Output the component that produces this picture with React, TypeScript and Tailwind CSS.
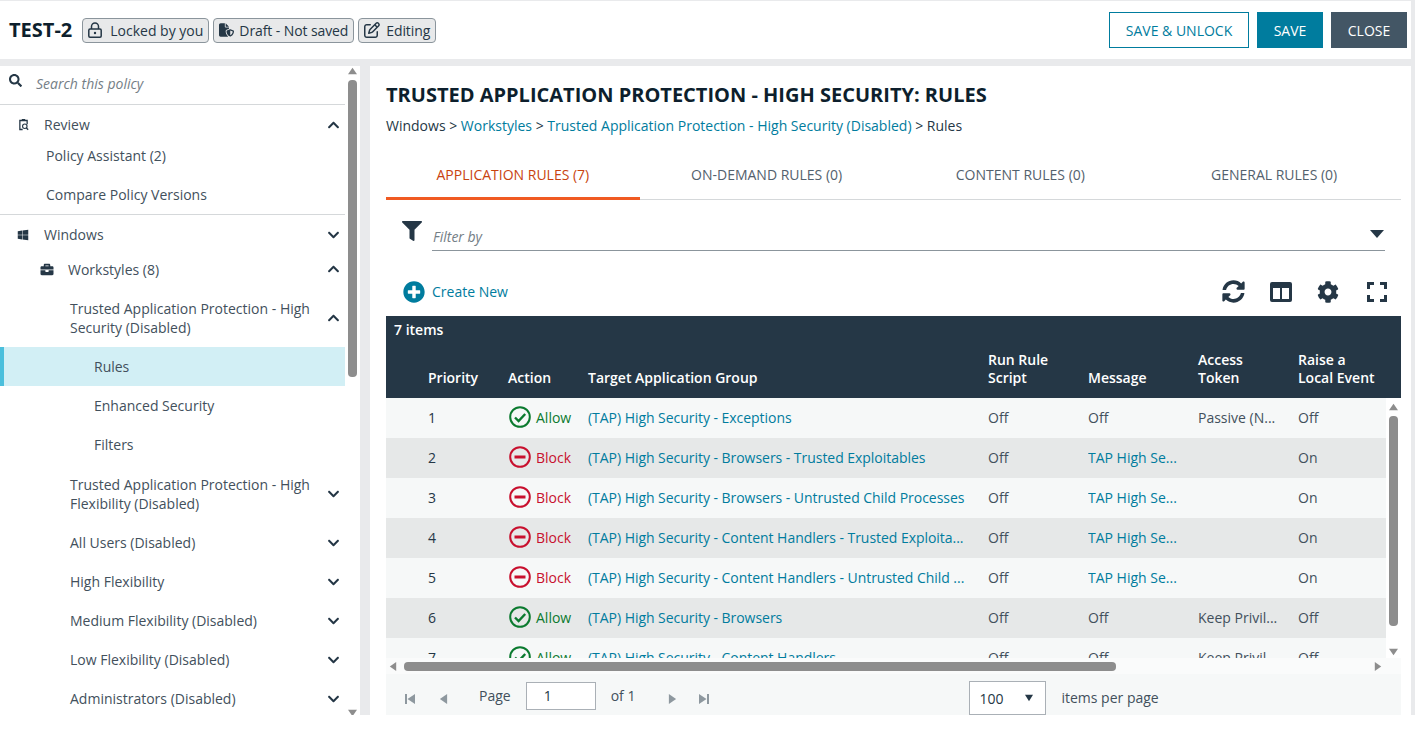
import {
    FaBriefcase,
    FaChevronDown,
    FaChevronUp,
    FaCog,
    FaFilter,
    FaPlusCircle,
    FaSearch,
    FaSyncAlt,
    FaWindows,
} from 'react-icons/fa';
import { FaFileShield, FaRegPenToSquare } from 'react-icons/fa6';

type NavRow = { label: string; height: string };

const policyRows: NavRow[] = [
    { label: 'Trusted Application Protection - High Flexibility (Disabled)', height: 'h-[59px]' },
    { label: 'All Users (Disabled)', height: 'h-[39px]' },
    { label: 'High Flexibility', height: 'h-[39px]' },
    { label: 'Medium Flexibility (Disabled)', height: 'h-[39px]' },
    { label: 'Low Flexibility (Disabled)', height: 'h-[39px]' },
    { label: 'Administrators (Disabled)', height: 'h-[39px]' },
];

type Rule = {
    id: number;
    allow: boolean;
    group: string;
    message: string;
    token: string;
    local: string;
};

const rules: Rule[] = [
    { id: 1, allow: true, group: '(TAP) High Security - Exceptions', message: 'Off', token: 'Passive (N...', local: 'Off' },
    { id: 2, allow: false, group: '(TAP) High Security - Browsers - Trusted Exploitables', message: 'TAP High Se...', token: '', local: 'On' },
    { id: 3, allow: false, group: '(TAP) High Security - Browsers - Untrusted Child Processes', message: 'TAP High Se...', token: '', local: 'On' },
    { id: 4, allow: false, group: '(TAP) High Security - Content Handlers - Trusted Exploita...', message: 'TAP High Se...', token: '', local: 'On' },
    { id: 5, allow: false, group: '(TAP) High Security - Content Handlers - Untrusted Child ...', message: 'TAP High Se...', token: '', local: 'On' },
    { id: 6, allow: true, group: '(TAP) High Security - Browsers', message: 'Off', token: 'Keep Privil...', local: 'Off' },
    { id: 7, allow: true, group: '(TAP) High Security - Content Handlers', message: 'Off', token: 'Keep Privil...', local: 'Off' },
];

const gridCols = 'grid grid-cols-[42px_80px_80px_400px_100px_110px_100px_88px]';

function Badge({ icon, label, tight }: { icon: React.ReactNode; label: string; tight?: boolean }) {
    return (
        <div className="h-[25px] flex items-center gap-[6px] px-[5px] rounded-[4px] border border-[#8b959c] bg-[#e8e9ea] text-[14px] text-[#253746]">
            {icon}
            <span className={tight ? 'tracking-[-0.1px]' : ''}>{label}</span>
        </div>
    );
}

function LockIcon() {
    return (
        <svg viewBox="0 0 14 16" className="w-[14px] h-[16px] mr-[2px] text-[#253746]" fill="none" stroke="currentColor" strokeWidth="1.5">
            <path d="M3.5 7V4.5a3.5 3.5 0 017 0V7" />
            <rect x="0.8" y="7" width="12.4" height="8.2" rx="1.2" />
            <circle cx="7" cy="11" r="1.2" fill="currentColor" stroke="none" />
        </svg>
    );
}

function Chevron({ open, place = 'top-1/2' }: { open?: boolean; place?: string }) {
    const cls = `w-[13px] h-[13px] text-[#253746] absolute right-[5px] ${place} -translate-y-1/2`;
    return open ? <FaChevronUp className={cls} /> : <FaChevronDown className={cls} />;
}

function ReviewIcon() {
    return (
        <svg viewBox="0 0 12 14" className="w-[11px] h-[12px] text-[#253746]" fill="currentColor">
            <path d="M1 1h3V0h4v1h3v5H9.5V2.5h-7v9H5V13H1z" />
            <circle cx="7.5" cy="8.5" r="2.6" fill="none" stroke="currentColor" strokeWidth="1.3" />
            <path d="M9.2 10.2l2.2 2.4" stroke="currentColor" strokeWidth="1.5" />
        </svg>
    );
}

function StatusIcon({ allow }: { allow: boolean }) {
    return (
        <svg viewBox="0 0 22 22" className="w-[22px] h-[22px] shrink-0 ml-[1px]" fill="none" stroke="currentColor" strokeWidth="2">
            <circle cx="11" cy="11" r="9.8" />
            {allow ? <path d="M6 11.5l3.6 3.6L16.2 8" strokeWidth="2.4" /> : <path d="M5.5 11h11" strokeWidth="3" />}
        </svg>
    );
}

function Triangle({ dir, className }: { dir: 'up' | 'down' | 'left' | 'right'; className: string }) {
    const d = { up: 'M5 1l5 8H0z', down: 'M0 1h10L5 9z', left: 'M9 0v10L1 5z', right: 'M1 0v10l8-5z' }[dir];
    return (
        <svg viewBox="0 0 10 10" className={className} fill="currentColor" preserveAspectRatio="none">
            <path d={d} />
        </svg>
    );
}

function PagerEnd({ flip }: { flip?: boolean }) {
    return (
        <svg viewBox="0 0 10 10" className={`w-[10px] h-[10px] text-[#8e989f] ${flip ? 'scale-x-[-1]' : ''}`} fill="currentColor">
            <path d="M0 0h2v10H0zM10 0v10L2.5 5z" />
        </svg>
    );
}

function Sidebar() {
    return (
        <aside className="relative w-[360px] shrink-0 bg-white overflow-hidden text-[14px] text-[#42505c]">
            <div className="w-[345px]">
                <div className="h-[39px] flex items-center border-b border-[#d5d8da]">
                    <FaSearch className="w-[13px] h-[13px] ml-[9px] mb-[10px] text-[#253746]" />
                    <span className="ml-[14px] mb-[4px] italic text-[#747e86]">Search this policy</span>
                </div>
                <div className="relative h-[39px] flex items-center pl-[18px] gap-[15px]">
                    <ReviewIcon />
                    <span>Review</span>
                    <Chevron open />
                </div>
                <div className="h-[31px] -mt-[4px] flex items-center pl-[46px]">Policy Assistant (2)</div>
                <div className="h-[39px] mt-[4px] flex items-center pl-[46px]">Compare Policy Versions</div>
                <div className="h-[40px] border-t border-[#d5d8da] relative flex items-center pl-[17px] gap-[15px]">
                    <FaWindows className="w-[12px] h-[12px] text-[#253746]" />
                    <span>Windows</span>
                    <Chevron />
                </div>
                <div className="relative h-[30px] flex items-center pl-[40px] gap-[14px]">
                    <FaBriefcase className="w-[14px] h-[13px] text-[#253746]" />
                    <span>Workstyles (8)</span>
                    <Chevron open />
                </div>
                <div className="relative h-[63px] pt-[5px] flex items-center pl-[70px] pr-[30px] leading-[19px]">
                    <span>Trusted Application Protection - High Security (Disabled)</span>
                    <Chevron open place="top-[34px]" />
                </div>
                <div className="h-[39px] flex items-center pl-[90px] bg-[#d2eff5] border-l-[4px] border-[#4bbfdc]">Rules</div>
                <div className="h-[39px] flex items-center pl-[94px]">Enhanced Security</div>
                <div className="h-[39px] flex items-center pl-[94px]">Filters</div>
                {policyRows.map((row) => (
                    <div key={row.label} className={`relative ${row.height} flex items-center pl-[70px] pr-[30px] leading-[19px]`}>
                        <span>{row.label}</span>
                        <Chevron />
                    </div>
                ))}
            </div>
            <Triangle dir="up" className="absolute left-[348px] top-[1px] w-[9px] h-[8px] text-[#8d8d8d]" />
            <div className="absolute left-[348px] top-[14px] w-[9px] h-[297px] rounded-[4px] bg-[#8d8d8d]" />
            <Triangle dir="down" className="absolute left-[348px] top-[643px] w-[9px] h-[8px] text-[#8d8d8d]" />
        </aside>
    );
}

function TableRow({ rule, striped }: { rule: Rule; striped: boolean }) {
    const link = 'text-[#007c9e] truncate';
    return (
        <div className={`${gridCols} h-[40px] pb-[2px] items-center ${striped ? 'bg-[#e6e8e8]' : 'bg-[#f6f8f8]'} text-[#42505c]`}>
            <span />
            <span className="text-[#253746]">{rule.id}</span>
            <span className={`flex items-center gap-[5px] ${rule.allow ? 'text-[#0b7a2f]' : 'text-[#c8102e]'}`}>
                <StatusIcon allow={rule.allow} />
                {rule.allow ? 'Allow' : 'Block'}
            </span>
            <span className="text-[#007c9e] whitespace-nowrap tracking-[-0.04px]">{rule.group}</span>
            <span>Off</span>
            <span className={rule.message === 'Off' ? '' : link}>{rule.message}</span>
            <span className="whitespace-nowrap">{rule.token}</span>
            <span>{rule.local}</span>
        </div>
    );
}

function Table() {
    return (
        <div className="w-[1015px] mt-[12px]">
            <div className="h-[82px] bg-[#253746] text-white relative">
                <div className="pl-[8px] pt-[4px] font-semibold text-[14px] leading-[19px]">7 items</div>
                <div className={`${gridCols} absolute left-0 right-0 bottom-[11px] items-end font-semibold leading-[18px] text-[14px]`}>
                    <span />
                    <span>Priority</span>
                    <span>Action</span>
                    <span>Target Application Group</span>
                    <span>
                        Run Rule
                        <br />
                        Script
                    </span>
                    <span>Message</span>
                    <span>
                        Access
                        <br />
                        Token
                    </span>
                    <span className="whitespace-nowrap">
                        Raise a
                        <br />
                        Local Event
                    </span>
                </div>
            </div>
            <div className="relative h-[276px] overflow-hidden">
                <div className="h-[260px] overflow-hidden w-[1000px]">
                    {rules.map((rule, i) => (
                        <TableRow key={rule.id} rule={rule} striped={i % 2 === 1} />
                    ))}
                </div>
                <div className="absolute right-0 top-0 h-[260px] w-[15px] bg-white" />
                <Triangle dir="up" className="absolute left-[1003px] top-[5px] w-[9px] h-[8px] text-[#8d8d8d]" />
                <div className="absolute left-[1003px] top-[18px] w-[9px] h-[210px] rounded-[4px] bg-[#8d8d8d]" />
                <Triangle dir="down" className="absolute left-[1003px] top-[250px] w-[9px] h-[8px] text-[#8d8d8d]" />
                <div className="absolute left-0 right-0 bottom-0 h-[16px] bg-[#fafbfb]">
                    <Triangle dir="left" className="absolute left-[3px] top-[4px] w-[8px] h-[9px] text-[#8d8d8d]" />
                    <div className="absolute left-[18px] top-[4px] w-[712px] h-[9px] rounded-[4px] bg-[#8d8d8d]" />
                    <Triangle dir="right" className="absolute left-[988px] top-[4px] w-[8px] h-[9px] text-[#8d8d8d]" />
                </div>
            </div>
            <div className="h-[41px] bg-[#f6f8f8] flex items-center text-[14px] text-[#42505c]">
                <span className="ml-[19px] mt-[8px]"><PagerEnd /></span>
                <Triangle dir="left" className="ml-[24px] mt-[8px] w-[9px] h-[10px] text-[#8e989f]" />
                <span className="ml-[31px] mt-[1px]">Page</span>
                <div className="ml-[15px] mt-[2px] w-[70px] h-[28px] border border-[#aab0b6] bg-white flex items-center pl-[17px] text-[#253746]">1</div>
                <span className="ml-[15px] mt-[1px]">of 1</span>
                <Triangle dir="right" className="ml-[33px] mt-[8px] w-[9px] h-[10px] text-[#8e989f]" />
                <span className="ml-[22px] mt-[8px]"><PagerEnd flip /></span>
                <div className="ml-[260px] self-end w-[77px] h-[34px] border border-[#aab0b6] bg-white flex items-center justify-between pl-[9px] pr-[12px] text-[#253746]">
                    100
                    <Triangle dir="down" className="w-[8px] h-[8px] text-[#253746]" />
                </div>
                <span className="ml-[15px] mt-[6px]">items per page</span>
            </div>
        </div>
    );
}

export default function App() {
    return (
        <div className="w-[1427px] h-[734px] bg-white font-['Open_Sans',sans-serif]">
            <div className="w-[1415px] h-[715px] bg-[#e9eaec] pt-px pr-[4px] flex flex-col">
                <header className="h-[58px] bg-white flex items-center pl-[9px] pr-[4px]">
                    <h1 className="text-[20px] font-bold text-[#0d1f2d] mr-[10px]">TEST-2</h1>
                    <div className="flex gap-[4px]">
                        <Badge icon={<LockIcon />} label="Locked by you" />
                        <Badge tight icon={<FaFileShield className="w-[15px] h-[16px] text-[#253746] -mr-px" />} label="Draft - Not saved" />
                        <Badge tight icon={<FaRegPenToSquare className="w-[16px] h-[16px] text-[#253746]" />} label="Editing" />
                    </div>
                    <div className="ml-auto flex gap-[8px] text-[14px]">
                        <button className="h-[36px] w-[140px] border border-[#007c9e] bg-white text-[#007c9e]">SAVE &amp; UNLOCK</button>
                        <button className="h-[36px] w-[66px] bg-[#007c9e] text-white">SAVE</button>
                        <button className="h-[36px] w-[76px] bg-[#435665] text-white">CLOSE</button>
                    </div>
                </header>
                <div className="flex-1 mt-[7px] flex gap-[10px] min-h-0">
                    <Sidebar />
                    <main className="flex-1 bg-white pl-[16px] pr-[10px] overflow-hidden text-[14px] text-[#253746]">
                        <h2 className="mt-[15px] text-[20px] leading-[27px] font-bold text-[#0d1f2d]">TRUSTED APPLICATION PROTECTION - HIGH SECURITY: RULES</h2>
                        <div className="mt-[8px] leading-[19px]">
                            Windows &gt; <span className="text-[#007c9e]">Workstyles</span> &gt; <span className="text-[#007c9e]">Trusted Application Protection - High Security (Disabled)</span> &gt; Rules
                        </div>
                        <nav className="mt-[15px] h-[50px] grid grid-cols-4 border-b border-[#d5d8da] text-[#53616d]">
                            <div className="h-[50px] pt-[1px] border-b-[3px] border-[#f05a22] flex items-center justify-center text-[#c8430f]">APPLICATION RULES (7)</div>
                            <div className="pb-[2px] flex items-center justify-center">ON-DEMAND RULES (0)</div>
                            <div className="pb-[2px] flex items-center justify-center">CONTENT RULES (0)</div>
                            <div className="pb-[2px] flex items-center justify-center">GENERAL RULES (0)</div>
                        </nav>
                        <div className="mt-[20px] flex items-start pl-[16px]">
                            <FaFilter className="w-[20px] h-[20px] mt-[1px] text-[#253746]" />
                            <div className="ml-[10px] w-[953px] h-[31px] border-b border-[#8b959c] flex items-center justify-between pt-[3px] pl-px pr-px">
                                <span className="italic text-[#747e86]">Filter by</span>
                                <Triangle dir="down" className="w-[14px] h-[10px] mb-[5px] text-[#253746]" />
                            </div>
                        </div>
                        <div className="mt-[28px] h-[25px] flex items-center pl-[17px] pr-[14px]">
                            <FaPlusCircle className="w-[22px] h-[22px] text-[#007c9e]" />
                            <span className="ml-[7px] text-[#007c9e]">Create New</span>
                            <div className="ml-auto flex items-center text-[#253746]">
                                <FaSyncAlt className="w-[23px] h-[23px]" />
                                <svg viewBox="0 0 22 20" className="ml-[25px] w-[22px] h-[20px]" fill="currentColor">
                                    <path fillRule="evenodd" d="M2 0h18a2 2 0 012 2v16a2 2 0 01-2 2H2a2 2 0 01-2-2V2a2 2 0 012-2zm1 6v11h7V6zm9 0v11h7V6z" />
                                </svg>
                                <FaCog className="ml-[25px] w-[22px] h-[22px]" />
                                <svg viewBox="0 0 20 20" className="ml-[28px] w-[20px] h-[20px]" fill="currentColor">
                                    <path d="M0 0h7v3H3v4H0zM13 0h7v7h-3V3h-4zM0 13h3v4h4v3H0zM17 13h3v7h-7v-3h4z" />
                                </svg>
                            </div>
                        </div>
                        <Table />
                    </main>
                </div>
            </div>
        </div>
    );
}
